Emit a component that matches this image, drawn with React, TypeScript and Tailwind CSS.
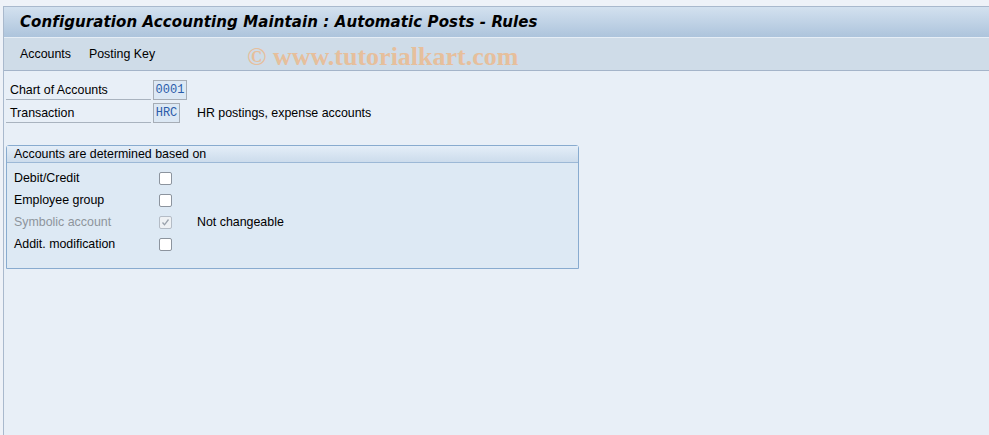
import React from "react";

const rows = [
  { label: "Debit/Credit", checked: false, disabled: false, note: "" },
  { label: "Employee group", checked: false, disabled: false, note: "" },
  { label: "Symbolic account", checked: true, disabled: true, note: "Not changeable" },
  { label: "Addit. modification", checked: false, disabled: false, note: "" },
];

const CheckBox = ({ checked, disabled }: { checked: boolean; disabled: boolean }) => (
  <div
    className={`w-[13px] h-[13px] rounded-[2px] border flex items-center justify-center ${
      disabled ? "border-[#b4bcc6] bg-[#eef1f4]" : "border-[#8c949e] bg-white"
    }`}
  >
    {checked && (
      <svg width="9" height="9" viewBox="0 0 9 9">
        <path d="M1.5 4.5 L3.5 6.8 L7.5 1.5" fill="none" stroke="#9aa2ac" strokeWidth="1.3" />
      </svg>
    )}
  </div>
);

const App = () => {
  return (
    <div
      className="w-[989px] h-[435px] bg-[#eef2f8] flex flex-col overflow-hidden text-[12.4px] text-black"
      style={{ fontFamily: "Tahoma, 'Liberation Sans', Arial, sans-serif" }}
    >
      <div className="h-[6px] shrink-0" />
      <div className="flex-1 flex flex-col ml-[3px] border-l border-t border-[#a9b9cd]">
        {/* title bar */}
        <div className="h-[31px] shrink-0 bg-gradient-to-b from-[#d3e1ef] to-[#adc4dc] flex items-center pl-[16px] border-b border-[#e6eef6]">
          <span
            className="text-[15px] font-bold italic tracking-[0.1px]"
            style={{ fontFamily: "'DejaVu Sans', Verdana, sans-serif" }}
          >
            Configuration Accounting Maintain : Automatic Posts - Rules
          </span>
        </div>
        {/* toolbar */}
        <div className="h-[33px] shrink-0 bg-[#cfdce8] border-b border-[#a4b4c9] flex items-center pl-[16px] relative">
          <span className="mr-[18px]">Accounts</span>
          <span>Posting Key</span>
          <span
            className="absolute left-[243px] top-[-1px] text-[26px] font-bold text-[#ecb88a] opacity-80"
            style={{ fontFamily: "'Liberation Serif', 'Times New Roman', serif" }}
          >
            © www.tutorialkart.com
          </span>
        </div>
        {/* content */}
        <div className="flex-1 bg-[#e8eff7] pl-[2px] pt-[8px]">
          <div className="flex items-center h-[22px]">
            <div className="w-[145px] h-[20px] border-b border-[#a9b3bf] pl-[4px] flex items-end pb-[1px] leading-[15px]">
              Chart of Accounts
            </div>
            <div
              className="ml-[2px] w-[34px] h-[20px] border border-[#a6adb6] bg-[#dce8f4] flex items-center justify-center text-[12px] text-[#2a5caa]"
              style={{ fontFamily: "'Liberation Mono', monospace" }}
            >
              0001
            </div>
          </div>
          <div className="flex items-center h-[22px] mt-[1px]">
            <div className="w-[145px] h-[20px] border-b border-[#a9b3bf] pl-[4px] flex items-end pb-[1px] leading-[15px]">
              Transaction
            </div>
            <div
              className="ml-[2px] w-[27px] h-[20px] border border-[#a6adb6] bg-[#dce8f4] flex items-center justify-center text-[12px] text-[#2a5caa]"
              style={{ fontFamily: "'Liberation Mono', monospace" }}
            >
              HRC
            </div>
            <span className="ml-[17px]">HR postings, expense accounts</span>
          </div>

          <div className="mt-[21px] w-[573px] h-[124px] border border-[#88abcf] rounded-t-[3px] bg-[#dde9f4] flex flex-col">
            <div className="h-[17px] shrink-0 bg-gradient-to-b from-[#e4eef8] to-[#ccdcec] border-b border-[#9cb8d6] pl-[7px] flex items-center">
              Accounts are determined based on
            </div>
            <div className="pt-[4px] pl-[7px]">
              {rows.map((r) => (
                <div key={r.label} className="flex items-center h-[22px]">
                  <span className={`w-[145px] ${r.disabled ? "text-[#8e959c]" : ""}`}>{r.label}</span>
                  <CheckBox checked={r.checked} disabled={r.disabled} />
                  {r.note && <span className="ml-[25px]">{r.note}</span>}
                </div>
              ))}
            </div>
          </div>
        </div>
      </div>
    </div>
  );
};

export default App;
